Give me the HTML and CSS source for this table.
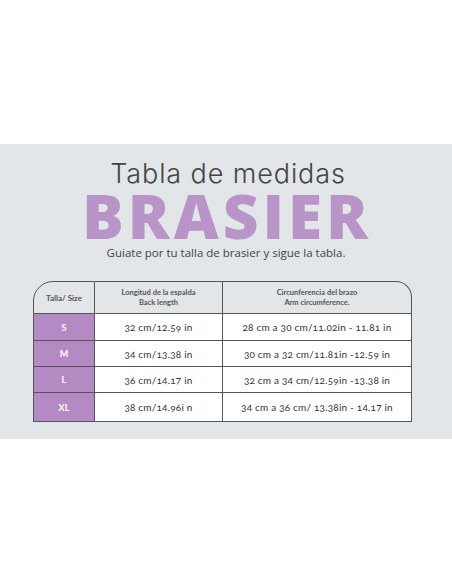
FILE: index.html
```html
<!DOCTYPE html>
<html lang="es">
<head>
    <meta charset="UTF-8">
    <meta name="viewport" content="width=device-width, initial-scale=1.0">
    <title>Tabla de medidas Brasier</title>
    <link rel="stylesheet" href="styles.css">
</head>
<body>
    <div class="top-space"></div>
    <div class="panel">
        <h2 class="title">Tabla de medidas</h2>
        <h1 class="brand">BRASIER</h1>
        <p class="subtitle">Guiate por tu talla de brasier y sigue la tabla.</p>

        <table class="sizes">
            <tr class="head">
                <th class="c-size">Talla/ Size</th>
                <th class="c-back">Longitud de la espalda<br>Back length</th>
                <th class="c-arm">Circunferencia del brazo<br>Arm circumference.</th>
            </tr>
            <tr class="r1">
                <td class="size">S</td>
                <td>32 cm/12.59 in</td>
                <td>28 cm a 30 cm/11.02in - 11.81 in</td>
            </tr>
            <tr class="r2">
                <td class="size">M</td>
                <td>34 cm/13.38 in</td>
                <td>30 cm a 32 cm/11.81in -12.59 in</td>
            </tr>
            <tr class="r3">
                <td class="size">L</td>
                <td>36 cm/14.17 in</td>
                <td>32 cm a 34 cm/12.59in -13.38 in</td>
            </tr>
            <tr class="r4">
                <td class="size">XL</td>
                <td>38 cm/14.96i n</td>
                <td>34 cm a 36 cm/ 13.38in - 14.17 in</td>
            </tr>
        </table>
    </div>
</body>
</html>
```

FILE: styles.css
```css
body {
    margin: 0;
    background-color: #ffffff;
    font-family: Lato, "Open Sans", sans-serif;
}
.top-space {
    height: 144px;
}
.panel {
    background-color: #e3e6e9;
    height: 295px;
    padding-top: 18px;
    box-sizing: border-box;
    text-align: center;
}
.title {
    margin: 0;
    padding-left: 4px;
    font-family: Inter, sans-serif;
    font-size: 27px;
    line-height: 24px;
    font-weight: 300;
    letter-spacing: 0.9px;
    color: #444444;
}
.brand {
    margin: 2px 0 0 0;
    padding-left: 2px;
    font-family: "Open Sans", sans-serif;
    font-size: 62px;
    line-height: 54px;
    font-weight: 800;
    letter-spacing: 4px;
    color: #b994c8;
}
.subtitle {
    margin: 4px 0 0 0;
    font-family: "Open Sans", sans-serif;
    font-size: 11.5px;
    line-height: 14px;
    color: #444444;
}
.sizes {
    margin: 21px 0 0 33px;
    width: 379px;
    border-collapse: separate;
    border-spacing: 0;
    font-variant-numeric: oldstyle-nums;
    color: #333333;
}
.sizes th, .sizes td {
    border-right: 1.5px solid #555555;
    border-bottom: 1.5px solid #555555;
    padding: 0;
    text-align: center;
}
.sizes th:first-child, .sizes td:first-child {
    border-left: 1.5px solid #555555;
}
.head th {
    border-top: 1.5px solid #555555;
    height: 31px;
    font-size: 7.5px;
    line-height: 10px;
    font-weight: 700;
    color: #555555;
    background-color: #e3e6e9;
}
.head .c-size {
    width: 60px;
    font-size: 8px;
    border-top-left-radius: 20px;
}
.head .c-back {
    width: 127px;
}
.head .c-arm {
    border-top-right-radius: 16px;
}
.sizes td {
    background-color: #ffffff;
    font-size: 10px;
    letter-spacing: 0.2px;
}
.sizes td.size {
    background-color: #b48ac4;
    color: #ffffff;
    font-weight: 700;
    font-size: 9px;
}
.r1 td { height: 26px; }
.r2 td { height: 25px; }
.r3 td { height: 25px; }
.r4 td { height: 28px; }
```
